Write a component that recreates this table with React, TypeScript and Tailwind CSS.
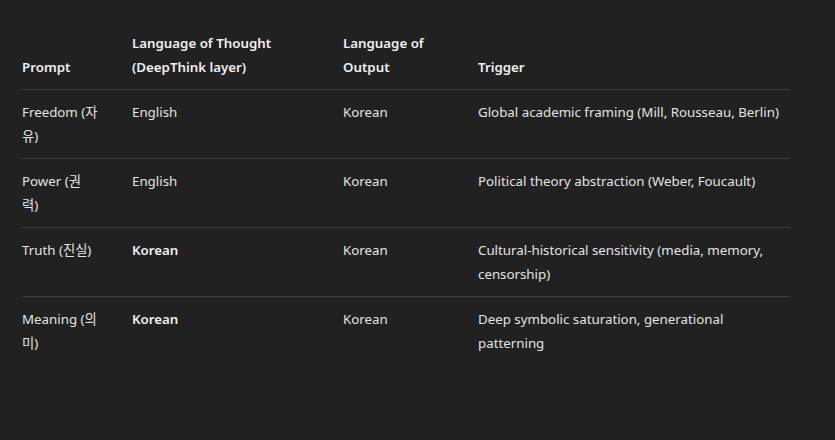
import React from "react";

const rows: { p: React.ReactNode; t: string; tb: boolean; o: string; g: React.ReactNode }[] = [
  { p: <>Freedom (자<br />유)</>, t: "English", tb: false, o: "Korean", g: "Global academic framing (Mill, Rousseau, Berlin)" },
  { p: <>Power (권<br />력)</>, t: "English", tb: false, o: "Korean", g: "Political theory abstraction (Weber, Foucault)" },
  { p: "Truth (진실)", t: "Korean", tb: true, o: "Korean", g: <>Cultural-historical sensitivity (media, memory,<br />censorship)</> },
  { p: <>Meaning (의<br />미)</>, t: "Korean", tb: true, o: "Korean", g: <>Deep symbolic saturation, generational<br />patterning</> },
];

export default function App() {
  return (
    <div
      className="w-[835px] h-[440px] bg-[#212121] text-[#e3e3e3] text-[14px] leading-[24px] pt-[21px] pl-[22px]"
      style={{ fontFamily: '"Noto Sans", "Noto Sans CJK KR", sans-serif' }}
    >
      <table className="table-fixed border-collapse w-[768px]">
        <colgroup>
          <col className="w-[110px]" />
          <col className="w-[211px]" />
          <col className="w-[135px]" />
          <col className="w-[312px]" />
        </colgroup>
        <thead>
          <tr className="border-b border-[#3d3d3d] text-[#f0f0f0] font-semibold text-[13.3px]">
            <th className="text-left align-bottom pt-[10px] pb-[10px] font-semibold whitespace-nowrap">Prompt</th>
            <th className="text-left align-bottom pt-[10px] pb-[10px] font-semibold whitespace-nowrap">Language of Thought<br />(DeepThink layer)</th>
            <th className="text-left align-bottom pt-[10px] pb-[10px] font-semibold whitespace-nowrap">Language of<br />Output</th>
            <th className="text-left align-bottom pt-[10px] pb-[10px] font-semibold whitespace-nowrap">Trigger</th>
          </tr>
        </thead>
        <tbody>
          {rows.map((r, i) => (
            <tr key={i} className={i < rows.length - 1 ? "border-b border-[#3d3d3d]" : ""}>
              <td className="align-top pt-[10px] pb-[10px] whitespace-nowrap text-[13.3px]">{r.p}</td>
              <td className={"align-top pt-[10px] pb-[10px] whitespace-nowrap text-[13.3px] " + (r.tb ? "font-semibold text-[#f0f0f0]" : "")}>{r.t}</td>
              <td className="align-top pt-[10px] pb-[10px] whitespace-nowrap text-[13.3px]">{r.o}</td>
              <td className="align-top pt-[10px] pb-[10px] whitespace-nowrap text-[13.3px]">{r.g}</td>
            </tr>
          ))}
        </tbody>
      </table>
    </div>
  );
}
